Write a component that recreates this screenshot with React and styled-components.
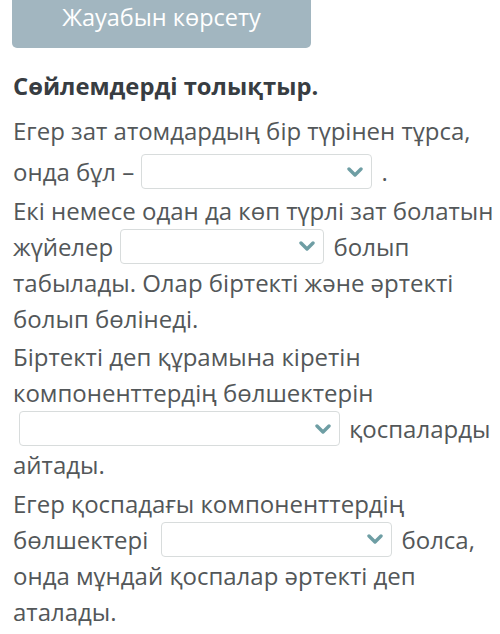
import React from "react";
import styled, { createGlobalStyle } from "styled-components";

const Global = createGlobalStyle`
  body {
    margin: 0;
    background: #ffffff;
    font-family: "Open Sans", "Noto Sans", sans-serif;
  }
`;

const Page = styled.main`
  padding: 0 6px 0 13px;
`;

const ShowButton = styled.button`
  display: flex;
  align-items: center;
  justify-content: center;
  margin-left: -1px;
  width: 299px;
  height: 48px;
  padding: 0 0 14px;
  border: none;
  border-radius: 0 0 5px 5px;
  background: #a2b6c0;
  color: #ffffff;
  font-family: "Open Sans", sans-serif;
  font-size: 23.5px;
`;

const Title = styled.h2`
  margin: 20px 0 9px;
  font-size: 23.8px;
  font-weight: 700;
  line-height: 36px;
  color: #383d42;
`;

const Sentence = styled.p`
  margin: 0 0 2.5px;
  font-size: 24px;
  line-height: 36px;
  color: #535759;
`;

const Select = styled.span`
  display: inline-block;
  overflow: hidden;
  box-sizing: border-box;
  width: ${(p) => p.$w}px;
  height: 35px;
  margin: ${(p) => p.$m};
  vertical-align: -8px;
  border: 1px solid #d8dcdc;
  border-radius: 4px;
  background: #ffffff;
`;

const SelectInner = styled.span`
  display: flex;
  align-items: center;
  justify-content: flex-end;
  height: 100%;
  padding-right: 8px;
`;

const Chevron = () => (
  <svg width="16" height="12" viewBox="0 0 16 12">
    <path
      d="M2 3 L8 9 L14 3"
      fill="none"
      stroke="#6e9ea4"
      strokeWidth="3.4"
      strokeLinecap="round"
      strokeLinejoin="round"
    />
  </svg>
);

const Dropdown = ({ width, margin }) => (
  <Select $w={width} $m={margin}>
    <SelectInner>
      <Chevron />
    </SelectInner>
  </Select>
);

export default function App() {
  return (
    <Page>
      <Global />
      <ShowButton>Жауабын көрсету</ShowButton>
      <Title>Сөйлемдерді толықтыр.</Title>
      <Sentence>
        Егер зат атомдардың бір түрінен тұрса, онда бұл –
        <Dropdown width={231} margin="5px 3px 0 7px" /> .
      </Sentence>
      <Sentence>
        Екі немесе одан да көп түрлі зат болатын жүйелер
        <Dropdown width={204} margin="0 3px 0 7px" /> болып табылады. Олар
        біртекті және әртекті болып бөлінеді.
      </Sentence>
      <Sentence>
        Біртекті деп құрамына кіретін компоненттердің бөлшектерін{" "}
        <Dropdown width={321} margin="0 3px 0 6px" /> қоспаларды айтады.
      </Sentence>
      <Sentence>
        Егер қоспадағы компоненттердің бөлшектері
        <Dropdown width={231} margin="0 3px 0 13px" /> болса, онда мұндай
        қоспалар әртекті деп аталады.
      </Sentence>
    </Page>
  );
}
